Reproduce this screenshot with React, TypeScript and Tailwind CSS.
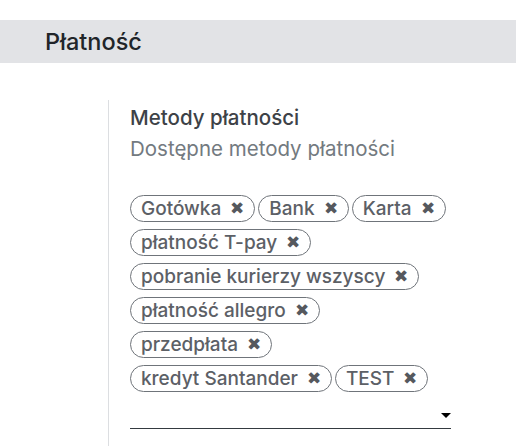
const tags = [
  ['Gotówka', 'Bank', 'Karta'],
  ['płatność T-pay'],
  ['pobranie kurierzy wszyscy'],
  ['płatność allegro'],
  ['przedpłata'],
  ['kredyt Santander', 'TEST'],
]

function Tag({ label }: { label: string }) {
  return (
    <span className="inline-flex h-[27px] items-center gap-[9px] rounded-full border border-[#6f747a] pl-[10px] pr-[10px] text-[19px] font-medium leading-none text-[#5c6066]">
      {label}
      <span className="text-[17px] text-[#55595e]">✖</span>
    </span>
  )
}

export default function App() {
  return (
    <div className="h-[446px] w-[516px] overflow-hidden bg-white font-['Inter',sans-serif]">
      <div className="mt-[20px] flex h-[43px] items-center bg-[#e2e3e6] pl-[45px] text-[23.5px] font-medium text-[#212529]">
        Płatność
      </div>
      <div className="ml-[108px] mt-[37px] h-[400px] border-l border-[#dcdee1] pl-[21px]">
        <div className="pt-[5px] text-[20.5px] font-medium leading-[25px] text-[#3d4247]">Metody płatności</div>
        <div className="mt-[6px] text-[20.5px] leading-[25px] text-[#737a80]">Dostępne metody płatności</div>
        <div className="mt-[34px] flex w-[321px] flex-col gap-y-[7px]">
          {tags.map((row, i) => (
            <div key={i} className="flex gap-x-[3px]">
              {row.map((t) => (
                <Tag key={t} label={t} />
              ))}
            </div>
          ))}
        </div>
        <div className="relative mt-[15px] h-[22px] w-[321px] border-b border-[#343a40]">
          <span className="absolute right-[0px] top-[6px] h-0 w-0 border-x-[5px] border-t-[5px] border-x-transparent border-t-black" />
        </div>
      </div>
    </div>
  )
}
